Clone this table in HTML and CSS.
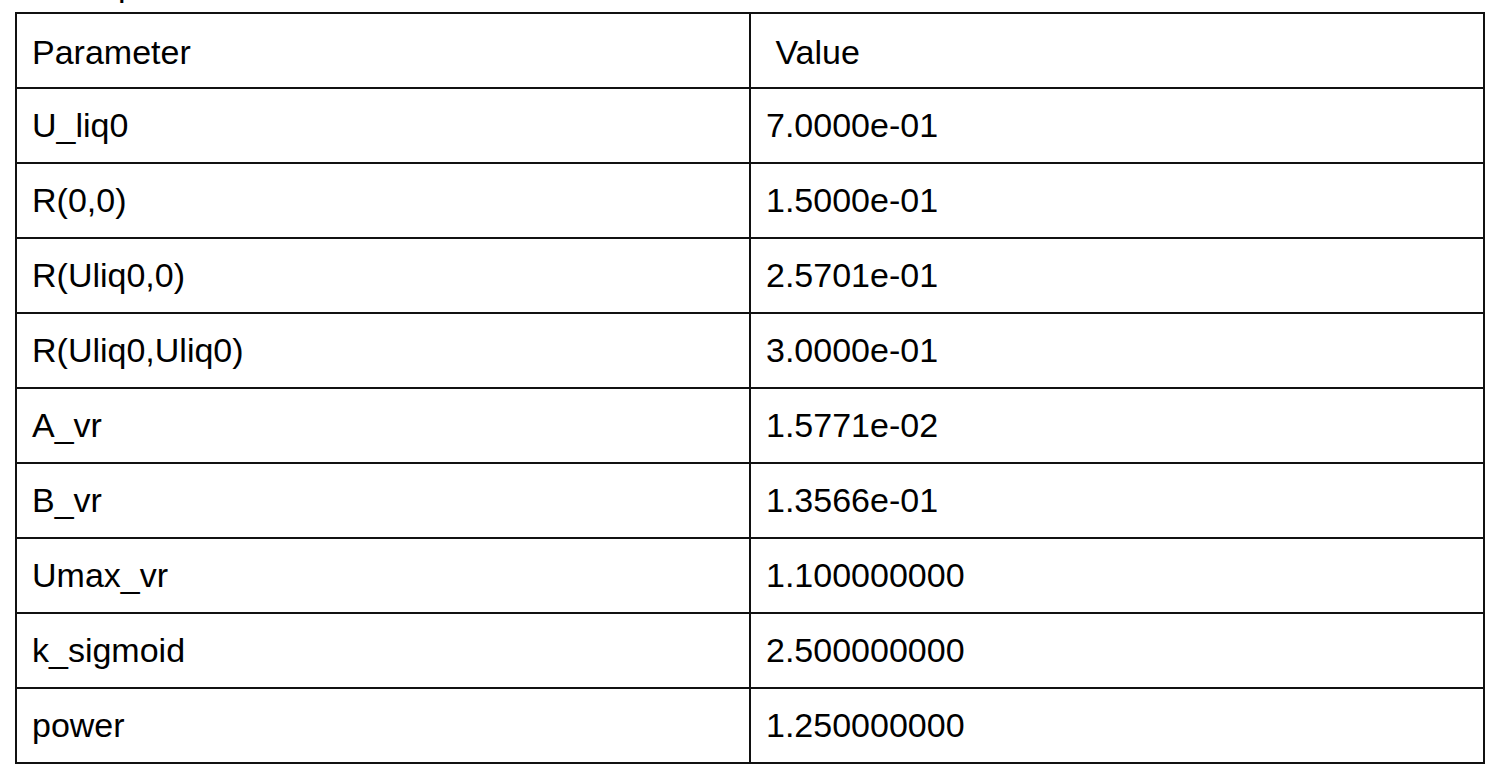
FILE: index.html
```html
<!DOCTYPE html>
<html lang="en">
<head>
<meta charset="utf-8">
<title>Model parameters</title>
<link rel="stylesheet" href="styles.css">
</head>
<body>
<div class="caption">Model parameters used:</div>
<table class="params">
  <tr><td class="head">Parameter</td><td class="head">&nbsp;Value</td></tr>
  <tr><td>U_liq0</td><td>7.0000e-01</td></tr>
  <tr><td>R(0,0)</td><td>1.5000e-01</td></tr>
  <tr><td>R(Uliq0,0)</td><td>2.5701e-01</td></tr>
  <tr><td>R(Uliq0,Uliq0)</td><td>3.0000e-01</td></tr>
  <tr><td>A_vr</td><td>1.5771e-02</td></tr>
  <tr><td>B_vr</td><td>1.3566e-01</td></tr>
  <tr><td>Umax_vr</td><td>1.100000000</td></tr>
  <tr><td>k_sigmoid</td><td>2.500000000</td></tr>
  <tr><td>power</td><td>1.250000000</td></tr>
</table>
</body>
</html>
```

FILE: styles.css
```css
html, body {
  margin: 0;
  padding: 0;
  background: #ffffff;
}

body {
  font-family: "Liberation Sans", Arial, sans-serif;
  color: #000000;
  overflow: hidden;
}

.caption {
  font-size: 34px;
  line-height: 34px;
  height: 34px;
  margin-top: -33px;
  padding-left: 16px;
  color: #000000;
}

.params {
  margin: 11px 0 0 15px;
  width: 1470px;
  table-layout: fixed;
  border-collapse: separate;
  border-spacing: 2px;
  background: #111111;
}

.params td {
  background: #ffffff;
  height: 73px;
  padding: 0 15px;
  font-size: 34px;
  vertical-align: middle;
  white-space: pre;
  box-sizing: border-box;
}

.params td.head {
  padding-top: 4px;
}
```
